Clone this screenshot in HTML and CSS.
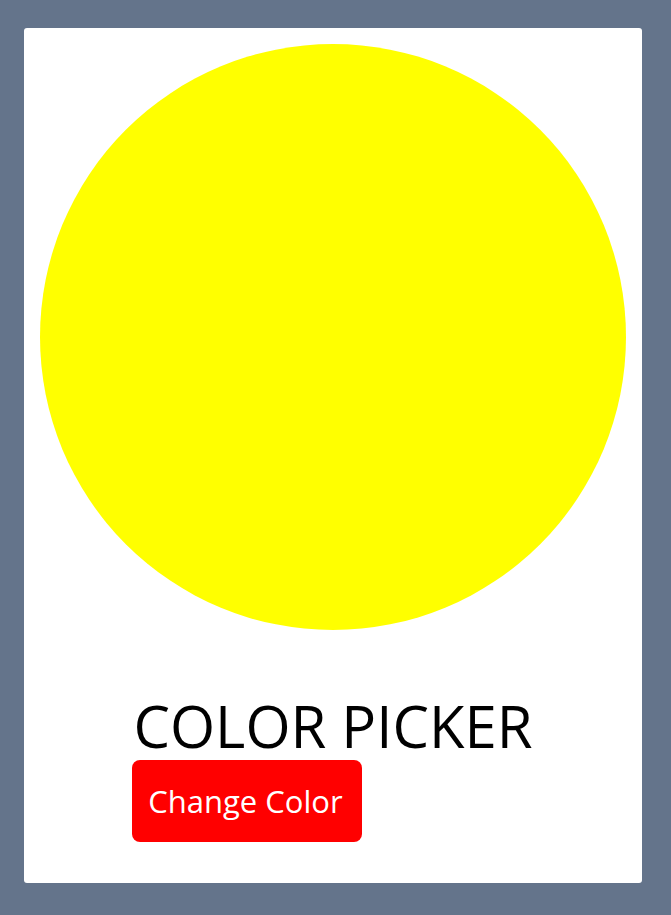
FILE: index.html
```html
<!DOCTYPE html>
<html>
<head>
<meta charset="utf-8">
<link rel="stylesheet" href="styles.css">
</head>
<body>
<div class="card">
  <div class="circle"></div>
  <div class="content">
    <div class="inner">
      <h1 class="title">COLOR PICKER</h1>
      <button class="btn">Change Color</button>
    </div>
  </div>
</div>
</body>
</html>
```
FILE: styles.css
```css
html, body {
  margin: 0;
  padding: 0;
  background: #64748b;
}
body {
  padding: 28px 0 0 24px;
  height: 915px;
  box-sizing: border-box;
  font-family: "Open Sans", "Noto Sans", sans-serif;
}
.card {
  width: 618px;
  height: 855px;
  box-sizing: border-box;
  background: #ffffff;
  border-radius: 3px;
  padding: 16px;
  display: flex;
  flex-direction: column;
}
.circle {
  width: 586px;
  height: 586px;
  border-radius: 50%;
  background: #ffff00;
  flex: none;
}
.content {
  display: flex;
  justify-content: center;
  margin-top: 62px;
}
.inner {
  display: flex;
  flex-direction: column;
  align-items: flex-start;
}
.title {
  margin: 0;
  font-weight: 400;
  font-size: 58px;
  line-height: 68px;
  color: #000;
  letter-spacing: 0;
}
.btn {
  margin: 0 0 0 -1px;
  width: 230px;
  height: 82px;
  border: none;
  border-radius: 8px;
  background: #ff0000;
  color: #ffffff;
  font-family: "Open Sans", "Noto Sans", sans-serif;
  font-size: 31px;
  padding: 0 4px 0 0;
  text-align: center;
}
```
